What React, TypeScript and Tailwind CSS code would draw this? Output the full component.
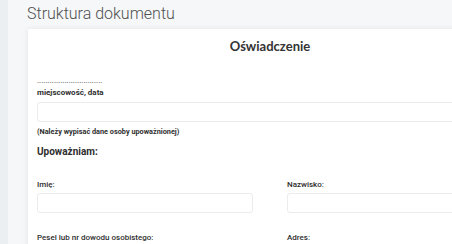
export default function App() {
  return (
    <div className="flex h-screen w-full overflow-hidden bg-[#eceff2] font-['Roboto',sans-serif] text-[#2e2e2e]">
      <div className="ml-[8px] flex-1 bg-[#f5f7f9]">
        <div className="h-[29px] pl-[19px] pt-[4px]">
          <h1 className="text-[16px] font-light leading-[20px] text-[#505050]">Struktura dokumentu</h1>
        </div>
        <div className="ml-[20px] h-full w-[484px] bg-white px-[9px] pt-[9px] shadow-[0_0_6px_rgba(0,0,0,0.08)]">
          <h2 className="text-center font-['Lato',sans-serif] text-[13px] font-bold leading-[16px] text-[#333]">
            Oświadczenie
          </h2>
          <div className="mt-[23px] text-[8px] leading-[8px] text-[#333]">
            ...............................
          </div>
          <div className="mt-[3px] text-[8px] font-bold leading-[10px]">miejscowość, data</div>
          <div className="mt-[4px] h-[20px] rounded-[3px] border border-[#eaeced] bg-white" />
          <div className="mt-[5px] text-[7.3px] font-bold leading-[10px]">
            (Należy wypisać dane osoby upoważnionej)
          </div>
          <div className="mt-[8px] text-[10px] font-bold leading-[14px]">Upoważniam:</div>
          <div className="mt-[21px] grid grid-cols-2 gap-x-[34px]">
            <div>
              <div className="text-[8px] font-medium leading-[10px]">Imię:</div>
              <div className="mt-[3px] h-[20px] rounded-[3px] border border-[#eaeced] bg-white" />
            </div>
            <div>
              <div className="text-[8px] font-medium leading-[10px]">Nazwisko:</div>
              <div className="mt-[3px] h-[20px] rounded-[3px] border border-[#eaeced] bg-white" />
            </div>
            <div className="mt-[20px]">
              <div className="text-[8px] font-medium leading-[10px]">Pesel lub nr dowodu osobistego:</div>
            </div>
            <div className="mt-[20px]">
              <div className="text-[8px] font-medium leading-[10px]">Adres:</div>
            </div>
          </div>
        </div>
      </div>
    </div>
  );
}
